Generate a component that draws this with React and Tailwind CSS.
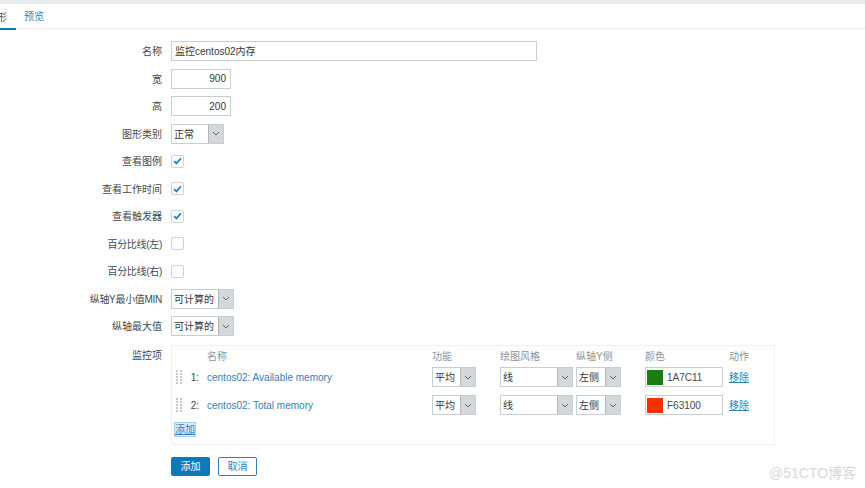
const FONT = "font-['Liberation_Sans','Noto_Sans_CJK_SC',sans-serif]";

function Select({ value, w, selW = 17 }) {
  return (
    <div className="flex h-[20px] border border-[#c5d0d5] bg-white shrink-0" style={{ width: w }}>
      <div className="flex-1 flex items-center pl-[2px] pt-px text-[10px] text-[#2f3a40] overflow-hidden whitespace-nowrap">{value}</div>
      <div className="h-full bg-[#d5d8d9] border-l border-[#b0b6b9] flex items-center justify-center" style={{ width: selW - 2 }}>
        <svg width="8" height="5" viewBox="0 0 8 5" fill="none"><path d="M1 1l3 3 3-3" stroke="#5f686d" strokeWidth="1" /></svg>
      </div>
    </div>
  );
}

function Row({ label, children, tight }) {
  return (
    <div className="flex items-center h-[27.5px]">
      <div className={`w-[162px] pt-px text-right text-[10px] text-[#3f4a50] whitespace-nowrap ${tight ? "tracking-[-0.3px]" : ""}`}>{label}</div>
      <div className="ml-[9px] flex items-center">{children}</div>
    </div>
  );
}

function Check({ on }) {
  return (
    <div className="w-[13px] h-[13px] border border-[#c9d3d8] rounded-[2px] bg-white flex items-center justify-center">
      {on && (
        <svg width="9" height="8" viewBox="0 0 9 8" fill="none"><path d="M1 4l2.4 2.4L8 1.2" stroke="#1a7fc0" strokeWidth="1.7" /></svg>
      )}
    </div>
  );
}

function Grip() {
  return (
    <svg width="6" height="15" viewBox="0 0 6 15" className="shrink-0" fill="#c3cacd">
      {[0, 3, 6, 9, 12].map((y) => (
        <g key={y}>
          <rect x="0" y={y} width="2" height="2" />
          <rect x="4" y={y} width="2" height="2" />
        </g>
      ))}
    </svg>
  );
}

function ItemRow({ n, name, color, code }) {
  return (
    <div className="flex items-center h-[28px]">
      <div className="w-[4px]" />
      <Grip />
      <div className="w-[17px] text-right text-[10px] text-[#3f4a50] shrink-0">{n}:</div>
      <div className="w-[233px] pl-[8px] text-[10px] text-[#2f7fb8] whitespace-nowrap shrink-0">{name}</div>
      <div className="w-[68px] shrink-0"><Select value="平均" w={44} /></div>
      <div className="w-[76px] shrink-0"><Select value="线" w={73} /></div>
      <div className="w-[69px] shrink-0"><Select value="左侧" w={45} /></div>
      <div className="w-[84px] shrink-0">
        <div className="w-[78px] h-[20px] border border-[#c5d0d5] flex items-center bg-white">
          <div className="w-[16px] h-[15px] ml-[1px]" style={{ background: color }} />
          <span className="ml-[4px] text-[10px] text-[#3f4a50]">{code}</span>
        </div>
      </div>
      <div className="text-[10px] text-[#2f7fb8] underline">移除</div>
    </div>
  );
}

export default function App() {
  return (
    <div className={`${FONT} w-[865px] h-[488px] bg-white overflow-hidden relative`}>
      <div className="h-[4px] bg-[#e9edf0]" />
      <div className="flex h-[25px] border-b border-[#ebeef0] items-end text-[10px]">
        <div className="w-[16px] h-[25px] pt-[2px] border-b-2 border-[#0f78b8] -mb-[2px] flex items-center justify-end pr-[9px] text-[#3f4a50] whitespace-nowrap overflow-hidden">
          <span className="shrink-0">图形</span>
        </div>
        <div className="ml-[8px] h-[25px] pt-[2px] flex items-center text-[#2b87c4]">预览</div>
      </div>
      <div className="pt-[8.5px]">
        <Row label="名称">
          <div className="w-[366px] h-[20px] border border-[#c5d0d5] flex items-center pl-[3px] pt-px text-[10px] text-[#2f3a40]">监控centos02内存</div>
        </Row>
        <Row label="宽">
          <div className="w-[60px] h-[20px] border border-[#c5d0d5] flex items-center justify-end pr-[4px] text-[10px] text-[#2f3a40]">900</div>
        </Row>
        <Row label="高">
          <div className="w-[60px] h-[20px] border border-[#c5d0d5] flex items-center justify-end pr-[4px] text-[10px] text-[#2f3a40]">200</div>
        </Row>
        <Row label="图形类别"><Select value="正常" w={53} /></Row>
        <Row label="查看图例"><Check on /></Row>
        <Row label="查看工作时间"><Check on /></Row>
        <Row label="查看触发器"><Check on /></Row>
        <Row label="百分比线(左)" tight><Check /></Row>
        <Row label="百分比线(右)" tight><Check /></Row>
        <Row label="纵轴Y最小值MIN" tight><Select value="可计算的" w={63} /></Row>
        <Row label="纵轴最大值"><Select value="可计算的" w={63} /></Row>
        <div className="flex mt-[5px]">
          <div className="w-[162px] text-right text-[10px] text-[#3f4a50] pt-[3px]">监控项</div>
          <div className="ml-[9px] w-[604px] h-[100px] border border-[#eef1f2] pt-[3px]">
            <div className="flex h-[14px] items-center text-[10px] text-[#8a9499]">
              <div className="w-[35px]" />
              <div className="w-[225px]">名称</div>
              <div className="w-[68px]">功能</div>
              <div className="w-[76px]">绘图风格</div>
              <div className="w-[69px]">纵轴Y侧</div>
              <div className="w-[84px]">颜色</div>
              <div>动作</div>
            </div>
            <ItemRow n="1" name="centos02: Available memory" color="#1A7C11" code="1A7C11" />
            <ItemRow n="2" name="centos02: Total memory" color="#F63100" code="F63100" />
            <div className="ml-[2px] mt-[3px] w-fit bg-[#dcebf8] border border-[#a9cdee] text-[10px] leading-[13px] text-[#2f7fb8] underline">添加</div>
          </div>
        </div>
        <div className="flex ml-[171px] mt-[12px] gap-[8px]">
          <div className="w-[39px] h-[19px] bg-[#0f78b8] rounded-[2px] flex items-center justify-center text-[10px] text-white">添加</div>
          <div className="w-[39px] h-[19px] border border-[#2f7fb8] rounded-[2px] flex items-center justify-center text-[10px] text-[#2f7fb8]">取消</div>
        </div>
      </div>
      <div className="absolute left-[769px] top-[463px] text-[14px] text-[#d8d8d8] whitespace-nowrap">@51CTO博客</div>
    </div>
  );
}
